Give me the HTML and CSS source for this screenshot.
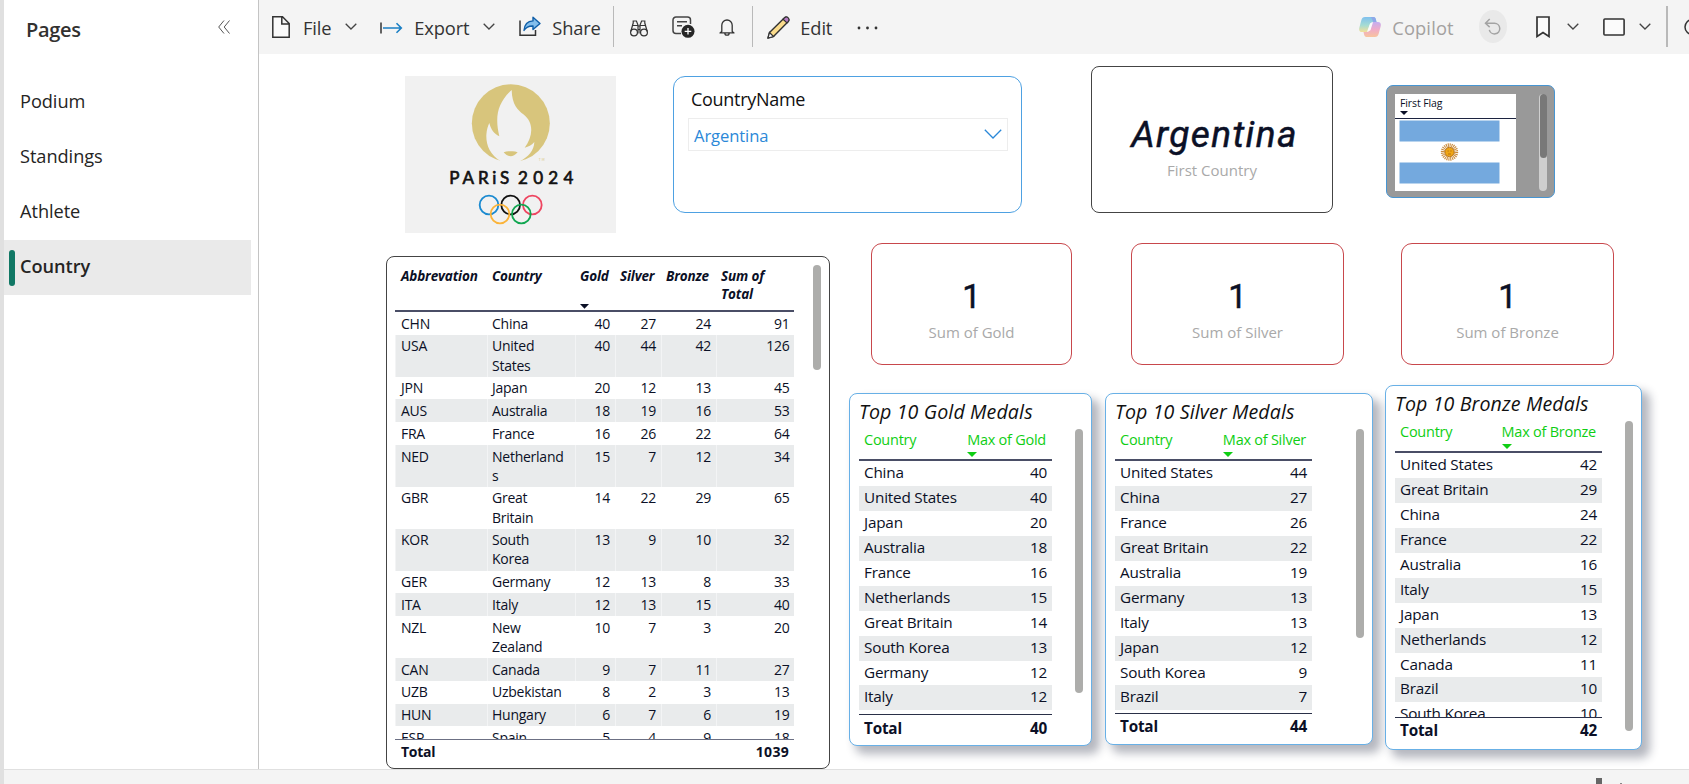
FILE: index.html
```html
<!DOCTYPE html>
<html lang="en">
<head>
<meta charset="utf-8">
<title>Country</title>
<link rel="stylesheet" href="styles.css">
</head>
<body>
<div class="app">
  <div class="workspace">
  <nav class="sidebar">
    <header class="side-head">
      <h2>Pages</h2>
      <svg class="collapse" width="12" height="14" viewBox="0 0 12 14"><path d="M6 .5 .7 7 6 13.500M11.500 .5 6.200 7l5.300 6.500" fill="none" stroke="#555" stroke-width="1"/></svg>
    </header>
    <a class="page">Podium</a>
    <a class="page">Standings</a>
    <a class="page">Athlete</a>
    <a class="page current"><i class="marker"></i>Country</a>
  </nav>
  <main class="main">
    <div class="toolbar">
      <svg class="ic-file" width="18" height="22" viewBox="0 0 18 22"><path d="M.8.8h9.700l6.700 6.700v13.700H.8zM9.800 1v7h7.200" fill="#fbfbfb" stroke="#333" stroke-width="1.500"/></svg>
      <span class="t-file">File</span>
      <svg class="chev c1" width="12" height="7" viewBox="0 0 12 7"><path d="M.7.7 6 6 11.300.7"/></svg>
      <svg class="ic-export" width="23" height="12" viewBox="0 0 23 12"><path d="M1 .5v11" stroke="#333" stroke-width="1.500"/><path d="M3 6h18M16.500 1.200 21.300 6l-4.800 4.800" fill="none" stroke="#1a7fc4" stroke-width="1.600"/></svg>
      <span class="t-export">Export</span>
      <svg class="chev c2" width="12" height="7" viewBox="0 0 12 7"><path d="M.7.7 6 6 11.300.7"/></svg>
      <svg class="ic-share" width="22" height="21" viewBox="0 0 22 21"><path d="M1 4.500V19.200h15.500V14" fill="none" stroke="#333" stroke-width="1.500"/><path d="M14 1.300 21 7.500 14 13.500V10C9.500 9.800 7 11.300 5 14.500 5.400 9 8.500 5.200 14 4.900z" fill="#83beec" stroke="#0f5ea8" stroke-width="1.400" stroke-linejoin="round"/></svg>
      <span class="t-share">Share</span>
      <i class="sep s1"></i>
      <svg class="ic-bino" width="18" height="17" viewBox="0 0 18 17"><g fill="none" stroke="#333" stroke-width="1.200"><circle cx="4" cy="12.500" r="3.400"/><circle cx="14" cy="12.500" r="3.400"/><path d="M.8 11.500 3.200 3M17.200 11.500 14.800 3M3.200 3.500V1h3.200L8 5v8.500M14.800 3.500V1h-3.200L10 5v8.500M3 5.500h4.500M10.500 5.500H15M8 6h2M8 9.500h2"/></g></svg>
      <svg class="ic-note" width="23" height="22" viewBox="0 0 23 22"><path d="M9 17.500H4a3 3 0 0 1-3-3V4a3 3 0 0 1 3-3h11.500a3 3 0 0 1 3 3v4" fill="none" stroke="#444" stroke-width="1.500"/><path d="M5 5.700h10M5 9.700h5" stroke="#444" stroke-width="1.400"/><circle cx="16" cy="15.300" r="6.500" fill="#262626"/><path d="M16 12v6.600M12.700 15.300h6.600" stroke="#fff" stroke-width="1.300"/></svg>
      <svg class="ic-bell" width="16" height="17" viewBox="0 0 16 17"><path d="M2.800 12.500V6.200a5.200 5.200 0 0 1 10.400 0v6.300l1.800 1.400H1zM5.800 14a2.200 2.200 0 0 0 4.400 0" fill="none" stroke="#333" stroke-width="1.300" stroke-linejoin="round"/></svg>
      <i class="sep s2"></i>
      <svg class="ic-pen" width="23" height="23" viewBox="0 0 23 23"><path d="M1 22l1.500-5.500L17 2.200a2.600 2.600 0 0 1 3.800 3.800L6.500 20.500z" fill="#fbdc8c" stroke="#333" stroke-width="1.400" stroke-linejoin="round"/><path d="M16 3.200l1.500-1.300a2.500 2.500 0 0 1 3.700 3.700L20 7z" fill="#b87cc4" stroke="#333" stroke-width="1.200"/><path d="M1 22l1.500-5.500 4 4z" fill="#fff" stroke="#333" stroke-width="1.200"/></svg>
      <span class="t-edit">Edit</span>
      <svg class="ic-dots" width="21" height="4" viewBox="0 0 21 4"><g fill="#333"><circle cx="2" cy="2" r="1.400"/><circle cx="10.500" cy="2" r="1.400"/><circle cx="19" cy="2" r="1.400"/></g></svg>
      <svg class="ic-copilot" width="22" height="20" viewBox="0 0 22 20"><defs><linearGradient id="ga" x1="0" y1="0" x2="0" y2="1"><stop offset="0" stop-color="#7fc0ee"/><stop offset=".55" stop-color="#a5dcd3"/><stop offset="1" stop-color="#f3e09a"/></linearGradient><linearGradient id="gb" x1="0" y1="0" x2="0" y2="1"><stop offset="0" stop-color="#c4aef0"/><stop offset=".5" stop-color="#f0abc8"/><stop offset="1" stop-color="#f8c49d"/></linearGradient></defs><path d="M6 0h8.500c1.500 0 2 1 2.400 2.500L17.500 5h-3.200c-2 0-2.800 1-3.300 2.700L9.400 13c-.5 1.500-1.200 2-2.600 2H3C.6 15-.3 13.200.3 10.800L2.400 3C3 .9 4 0 6 0z" fill="url(#ga)"/><path d="M16 20H7.500c-1.500 0-2-1-2.400-2.500L4.500 15h3.200c2 0 2.800-1 3.300-2.700L12.600 7c.5-1.500 1.200-2 2.600-2H19c2.400 0 3.300 1.800 2.700 4.200L19.600 17c-.6 2.100-1.600 3-3.600 3z" fill="url(#gb)"/><path d="M11 6.500 14 5.300 11.500 13.200 8 14.700z" fill="#fafafa"/><path d="M12 0h2.500c1.500 0 2 1 2.400 2.500L17.500 5h-3.200z" fill="#8fa8e8"/></svg>
      <span class="t-copilot">Copilot</span>
      <span class="undo"><svg width="18" height="17" viewBox="0 0 18 17"><path d="M2 5.300h8.500a5.300 5.300 0 1 1-5.200 6.500M5.700 1 1.500 5.300l4.200 3.800" fill="none" stroke="#a3a3a3" stroke-width="1.500"/></svg></span>
      <svg class="ic-mark" width="14" height="22" viewBox="0 0 14 22"><path d="M1 1h12v19.500l-6-4-6 4z" fill="#fbfbfb" stroke="#333" stroke-width="1.700"/></svg>
      <svg class="chev c3" width="12" height="7" viewBox="0 0 12 7"><path d="M.7.7 6 6 11.300.7"/></svg>
      <svg class="ic-view" width="22" height="18" viewBox="0 0 22 18"><rect x=".9" y="1" width="20.200" height="16" rx="1" fill="#fbfbfb" stroke="#333" stroke-width="1.600"/></svg>
      <svg class="chev c4" width="12" height="7" viewBox="0 0 12 7"><path d="M.7.7 6 6 11.300.7"/></svg>
      <i class="sep s3"></i>
      <svg class="ic-ring" width="5" height="18" viewBox="0 0 5 18"><circle cx="8.500" cy="9" r="7.500" fill="none" stroke="#333" stroke-width="1.500"/></svg>
    </div>

    <div class="report">
      <div class="top-row">
        <svg class="logo" viewBox="45 48 633 471">
          <rect x="45" y="48" width="633" height="471" fill="#f1f1f1"/>
          <circle cx="362.500" cy="190" r="117" fill="#d8c57c"/>
          <path d="M365 90C366 135 384 150 400 163C434 190 428 230 404 263C416 260 424 256 433 246C432 272 415 290 390 304L388 312H336L332 304C300 283 288 255 289 225C290 208 294 198 298 189C303 210 312 220 328 229C314 170 322 130 365 90Z" fill="#f1f1f1"/>
          <path d="M341 277Q352 272 362 274Q372 272 383 277Q372 289 362 289Q350 289 341 277Z" fill="#d8c57c"/>
          <text x="446" y="303" class="logo-tm" textLength="18">TM</text>
          <text x="178" y="372" class="logo-name" textLength="180" lengthAdjust="spacing">PARiS</text>
          <text x="384" y="372" class="logo-name" textLength="166" lengthAdjust="spacing">2024</text>
          <g fill="none" stroke-width="5.500"><circle cx="297" cy="435" r="28" stroke="#1a8ad0"/><circle cx="362" cy="435" r="28" stroke="#111"/><circle cx="427" cy="435" r="28" stroke="#ee4560"/><circle cx="330" cy="462" r="28" stroke="#fbb43a"/><circle cx="394" cy="462" r="28" stroke="#10a650"/></g>
        </svg>
        <section class="slicer">
          <h3>CountryName</h3>
          <div class="dropdown"><span>Argentina</span><svg width="18" height="10" viewBox="0 0 18 10"><path d="M.8.8 9 9 17.200.8" fill="none" stroke="#2b88d8" stroke-width="1.300"/></svg></div>
        </section>
        <section class="card first-country"><b>Argentina</b><span>First Country</span></section>
        <section class="flag-card">
          <div class="flag-table">
            <div class="flag-head"><span>First Flag</span><svg width="8" height="4" viewBox="0 0 8 4"><path d="M0 0h8L4 4z" fill="#0b1026"/></svg></div>
            <svg class="flag" width="101" height="64" viewBox="0 0 101 64"><path d="M0 0h101v64H0z" fill="#fff"/><path d="M.5.5h100v21H.5zM.5 42.500h100v21H.5z" fill="#74a9de"/><circle cx="50.500" cy="32" r="6.700" fill="none" stroke="#c98a3c" stroke-width="4" stroke-dasharray="1 .75"/><circle cx="50.500" cy="32" r="4.600" fill="#f0a614" stroke="#b8741a" stroke-width="1"/><path d="M48.500 31h1.300M51.300 31h1.300M49 34h3" stroke="#a8650f" stroke-width=".8"/></svg>
          </div>
          <div class="flag-track"><i></i></div>
        </section>
      </div>

      <div class="body-row">
        <section class="standings">
          <div class="grid">
            <div class="r head"><span>Abbrevation</span><span>Country</span><span class="sorted">Gold<svg width="9" height="5" viewBox="0 0 9 5"><path d="M0 0h9L4.500 4.700z" fill="#0b1026"/></svg></span><span>Silver</span><span>Bronze</span><span>Sum of Total</span></div>
            <div class="rows">
              <div class="r"><span>CHN</span><span>China</span><span>40</span><span>27</span><span>24</span><span>91</span></div>
              <div class="r"><span>USA</span><span>United<br>States</span><span>40</span><span>44</span><span>42</span><span>126</span></div>
              <div class="r"><span>JPN</span><span>Japan</span><span>20</span><span>12</span><span>13</span><span>45</span></div>
              <div class="r"><span>AUS</span><span>Australia</span><span>18</span><span>19</span><span>16</span><span>53</span></div>
              <div class="r"><span>FRA</span><span>France</span><span>16</span><span>26</span><span>22</span><span>64</span></div>
              <div class="r"><span>NED</span><span>Netherland<br>s</span><span>15</span><span>7</span><span>12</span><span>34</span></div>
              <div class="r"><span>GBR</span><span>Great<br>Britain</span><span>14</span><span>22</span><span>29</span><span>65</span></div>
              <div class="r"><span>KOR</span><span>South<br>Korea</span><span>13</span><span>9</span><span>10</span><span>32</span></div>
              <div class="r"><span>GER</span><span>Germany</span><span>12</span><span>13</span><span>8</span><span>33</span></div>
              <div class="r"><span>ITA</span><span>Italy</span><span>12</span><span>13</span><span>15</span><span>40</span></div>
              <div class="r"><span>NZL</span><span>New<br>Zealand</span><span>10</span><span>7</span><span>3</span><span>20</span></div>
              <div class="r"><span>CAN</span><span>Canada</span><span>9</span><span>7</span><span>11</span><span>27</span></div>
              <div class="r"><span>UZB</span><span>Uzbekistan</span><span>8</span><span>2</span><span>3</span><span>13</span></div>
              <div class="r"><span>HUN</span><span>Hungary</span><span>6</span><span>7</span><span>6</span><span>19</span></div>
              <div class="r"><span>ESP</span><span>Spain</span><span>5</span><span>4</span><span>9</span><span>18</span></div>
            </div>
            <div class="total"><span>Total</span><span>1039</span></div>
          </div>
          <i class="thumb"></i>
        </section>

        <div class="right">
          <div class="kpis">
            <section class="card kpi k-gold"><b>1</b><span>Sum of Gold</span></section>
            <section class="card kpi k-silver"><b>1</b><span>Sum of Silver</span></section>
            <section class="card kpi k-bronze"><b>1</b><span>Sum of Bronze</span></section>
          </div>
          <div class="tops">
            <section class="top10 gold">
              <h3>Top 10 Gold Medals</h3>
              <div class="top-body">
                <div class="list">
                  <div class="lh"><span>Country</span><span>Max of Gold<svg width="10" height="5" viewBox="0 0 10 5"><path d="M0 0h10L5 5z" fill="#0fce14"/></svg></span></div>
                  <div class="lrows">
                    <div><span>China</span><span>40</span></div><div><span>United States</span><span>40</span></div>
                    <div><span>Japan</span><span>20</span></div><div><span>Australia</span><span>18</span></div>
                    <div><span>France</span><span>16</span></div><div><span>Netherlands</span><span>15</span></div>
                    <div><span>Great Britain</span><span>14</span></div><div><span>South Korea</span><span>13</span></div>
                    <div><span>Germany</span><span>12</span></div><div><span>Italy</span><span>12</span></div>
                  </div>
                  <div class="lt"><span>Total</span><span>40</span></div>
                </div>
                <i class="thumb"></i>
              </div>
            </section>
            <section class="top10 silver">
              <h3>Top 10 Silver Medals</h3>
              <div class="top-body">
                <div class="list">
                  <div class="lh"><span>Country</span><span>Max of Silver<svg width="10" height="5" viewBox="0 0 10 5"><path d="M0 0h10L5 5z" fill="#0fce14"/></svg></span></div>
                  <div class="lrows">
                    <div><span>United States</span><span>44</span></div><div><span>China</span><span>27</span></div>
                    <div><span>France</span><span>26</span></div><div><span>Great Britain</span><span>22</span></div>
                    <div><span>Australia</span><span>19</span></div><div><span>Germany</span><span>13</span></div>
                    <div><span>Italy</span><span>13</span></div><div><span>Japan</span><span>12</span></div>
                    <div><span>South Korea</span><span>9</span></div><div><span>Brazil</span><span>7</span></div>
                  </div>
                  <div class="lt"><span>Total</span><span>44</span></div>
                </div>
                <i class="thumb"></i>
              </div>
            </section>
            <section class="top10 bronze">
              <h3>Top 10 Bronze Medals</h3>
              <div class="top-body">
                <div class="list">
                  <div class="lh"><span>Country</span><span>Max of Bronze<svg width="10" height="5" viewBox="0 0 10 5"><path d="M0 0h10L5 5z" fill="#0fce14"/></svg></span></div>
                  <div class="lrows">
                    <div><span>United States</span><span>42</span></div><div><span>Great Britain</span><span>29</span></div>
                    <div><span>China</span><span>24</span></div><div><span>France</span><span>22</span></div>
                    <div><span>Australia</span><span>16</span></div><div><span>Italy</span><span>15</span></div>
                    <div><span>Japan</span><span>13</span></div><div><span>Netherlands</span><span>12</span></div>
                    <div><span>Canada</span><span>11</span></div><div><span>Brazil</span><span>10</span></div>
                    <div><span>South Korea</span><span>10</span></div>
                  </div>
                  <div class="lt"><span>Total</span><span>42</span></div>
                </div>
                <i class="thumb"></i>
              </div>
            </section>
          </div>
        </div>
      </div>
    </div>
  </main>
  </div>
  <footer class="status"><i class="slider"></i><i class="tick"></i></footer>
</div>
</body>
</html>
```
FILE: styles.css
```css
* { box-sizing: border-box; }
body { margin: 0; font-family: "Open Sans", "Noto Sans", sans-serif; color: #0b1026; background: #fff; overflow: hidden; }
h2, h3 { margin: 0; font-weight: 400; }
svg { display: block; flex: none; }
i { display: block; flex: none; }
span { white-space: nowrap; }

.app { width: 1689px; height: 784px; border-left: 4px solid #e0e0e0; }
.workspace { display: flex; height: 769px; }

.sidebar { flex: none; width: 255px; height: 769px; border-right: 1px solid #c4c4c4; background: #fff; }
.side-head { display: flex; height: 73px; padding: 17px 28px 0 22px; justify-content: space-between; }
.side-head h2 { font-size: 20px; line-height: 26px; font-weight: 600; letter-spacing: -.3px; color: #323130; }
.collapse { margin-top: 3px; }
.page { display: flex; align-items: center; height: 55px; padding-left: 16px; font-size: 18.2px; letter-spacing: -.05px; color: #252423; }
.page.current { width: 247px; height: 55px; margin-top: 2px; padding: 0 0 4px 5px; background: #eaeaea; font-weight: 600; }
.marker { width: 6px; height: 36px; margin: 4px 5px 0 0; border-radius: 3px; background: #117865; }

.main { flex: none; width: 1430px; height: 769px; display: flex; flex-direction: column; }
.toolbar { flex: none; display: flex; align-items: flex-start; height: 54px; background: #f4f4f4; font-size: 18.3px; line-height: 26px; letter-spacing: -.15px; color: #333; overflow: hidden; }
.toolbar span:not(.undo) { margin-top: 15px; }
.chev { margin-top: 23px; }
.chev path { fill: none; stroke: #444; stroke-width: 1.3; }
.ic-file { margin: 16px 0 0 13px; }
.t-file { width: 30px; margin-left: 13px; }
.c1 { margin-left: 14px; }
.ic-export { margin: 22px 0 0 23px; }
.t-export { width: 56px; margin-left: 11px; }
.c2 { margin-left: 14px; }
.ic-share { margin: 16px 0 0 24px; }
.t-share { width: 48px; margin-left: 11px; }
.sep { width: 1px; height: 41px; margin-top: 6px; background: #b9b9b9; }
.s1 { margin-left: 13px; }
.ic-bino { margin: 20px 0 0 16px; }
.ic-note { margin: 16px 0 0 24px; }
.ic-bell { margin: 19px 0 0 24px; }
.s2 { margin-left: 17px; }
.ic-pen { margin: 16px 0 0 14px; }
.t-edit { width: 34px; margin-left: 10px; }
.ic-dots { margin: 26px 0 0 25px; }
.ic-copilot { margin: 17px 0 0 481px; }
.t-copilot { width: 63px; margin-left: 11px; letter-spacing: .15px; color: #a3a19f; }
.undo { display: flex; width: 33px; height: 33px; margin: 10px 0 0 25px; align-items: center; justify-content: center; border-radius: 50%; background: #e9e9e9; }
.ic-mark { margin: 16px 0 0 29px; }
.c3 { margin-left: 17px; }
.ic-view { margin: 18px 0 0 24px; }
.c4 { margin-left: 14px; }
.s3 { width: 2px; margin-left: 15px; }
.ic-ring { margin: 18px 0 0 16px; }

.report { flex: none; height: 715px; padding-left: 127px; }
.top-row { display: flex; align-items: flex-start; height: 189px; }
.logo { width: 211px; height: 157px; margin: 22px 0 0 19px; }
.logo-name { font: 400 51px Lato, sans-serif; fill: #111; stroke: #111; stroke-width: 2px; }
.logo-tm { font: 9px Lato, sans-serif; fill: #d8c57c; }

.slicer { flex: none; width: 349px; height: 137px; margin: 22px 0 0 57px; padding: 10px 13px 0 14px; border: 1px solid #4ea1e2; border-radius: 12px; }
.slicer h3 { padding-left: 3px; font-size: 18px; line-height: 25px; letter-spacing: -.3px; color: #111; }
.dropdown { display: flex; justify-content: space-between; width: 320px; height: 33px; margin-top: 6px; padding: 4px 5px 0; border: 1px solid #ededed; font-size: 16.6px; line-height: 25px; letter-spacing: -.1px; color: #2b88d8; }
.dropdown svg { margin-top: 6px; }

.card { flex: none; display: flex; flex-direction: column; align-items: center; }
.card span { color: #a9a9a9; font-size: 15px; line-height: 20px; }
.card b { font-family: Roboto, sans-serif; font-weight: 400; -webkit-text-stroke: .5px #0b1026; }
.first-country { width: 242px; height: 147px; margin: 12px 0 0 69px; padding-top: 45px; border: 1px solid #444; border-radius: 8px; }
.first-country b { padding-left: 5px; font-size: 37px; line-height: 46px; font-style: italic; letter-spacing: 1.4px; }
.first-country span { margin-top: 2px; }

.flag-card { flex: none; display: flex; width: 169px; height: 113px; margin: 31px 0 0 53px; padding: 8px 7px 0 8px; justify-content: space-between; border: 1px solid #4795d2; border-radius: 7px; background: #999; }
.flag-table { width: 121px; height: 97px; background: #fff; }
.flag-head { height: 25px; padding: 1px 0 0 5px; border-bottom: 1px solid #1c2340; font-size: 10.5px; line-height: 16px; letter-spacing: -.1px; }
.flag { margin: 1px 0 0 4px; }
.flag-track { width: 8px; height: 97px; border-radius: 4px; background: #cfcfcf; }
.flag-track i { width: 7px; height: 64px; margin-left: .5px; border-radius: 4px; background: #787878; }

.body-row { display: flex; align-items: flex-start; }
.standings { flex: none; display: flex; justify-content: space-between; width: 444px; height: 513px; margin-top: 13px; padding: 8px; border: 1px solid #444; border-radius: 8px; }
.grid { width: 399px; font-size: 14px; letter-spacing: -.25px; line-height: 19.150px; }
.r { display: grid; grid-template-columns: 91.500px 88px 40px 46px 55px 78.500px; }
.r > span { padding: 1.600px 4.500px 2px 4.500px; text-align: right; border-left: 1px solid transparent; }
.r > span:nth-child(-n+2) { text-align: left; }
.r > span:first-child { padding-left: 5px; }
.head { height: 47px; border-bottom: 2px solid #4a4e66; font-size: 13.5px; font-weight: 700; font-style: italic; letter-spacing: -.15px; line-height: 18px; }
.head > span { padding-right: 0; white-space: normal; text-align: left; }
.head > span:last-child { padding-right: 20px; }
.head svg { margin-top: 19px; }
.rows { height: 427px; overflow: hidden; }
.rows .r:nth-child(even) > span { border-color: #f3f4f5; background: #e9ebec; }
.total { display: flex; justify-content: space-between; padding: 2px 5px 0 6px; border-top: 1px solid #6c7084; font-weight: 700; line-height: 20px; }
.total span:last-child { letter-spacing: .3px; }
.thumb { width: 8px; border-radius: 4px; background: #adadab; }
.standings .thumb { height: 105px; }

.right { flex: none; width: 812px; }
.kpis { display: flex; height: 142px; padding-left: 41px; }
.kpi { height: 122px; padding-top: 34px; border: 1px solid #c8474c; border-radius: 11px; }
.kpi b { font-size: 33px; line-height: 38px; }
.kpi span { margin-top: 6px; }
.k-gold { width: 201px; }
.k-silver { width: 213px; margin-left: 59px; }
.k-bronze { width: 213px; margin-left: 57px; }

.tops { display: flex; align-items: flex-start; padding-left: 19px; }
.top10 { flex: none; padding: 6px 8px 0 9px; border: 1px solid #68b0e6; border-radius: 8px; background: #fff; box-shadow: 7px 7px 10px 1px rgba(30,35,60,.33); }
.top10 h3 { font-size: 19.6px; font-style: italic; line-height: 24px; letter-spacing: .12px; color: #111; white-space: nowrap; }
.top-body { display: flex; justify-content: space-between; }
.gold { width: 243px; height: 353px; margin-top: 8px; }
.silver { width: 268px; height: 352px; margin: 8px 0 0 13px; }
.bronze { width: 257px; height: 365px; margin-left: 12px; }
.list { width: 193px; font-size: 15.3px; letter-spacing: -.2px; }
.silver .list { width: 197px; }
.bronze .list { width: 207px; }
.lh, .lt, .lrows div { display: flex; justify-content: space-between; padding: 0 5px; }
.lh { height: 37px; padding: 6px 6px 0 5px; border-bottom: 2px solid #4a4e66; line-height: 20px; font-size: 14.5px; letter-spacing: -.25px; color: #0fce14; }
.lh svg { margin-top: 2px; }
.lrows { height: 253px; overflow: hidden; }
.lrows div { height: 24.950px; line-height: 23.500px; }
.lrows div:nth-child(even) { background: #e9ebec; }
.lt { border-top: 1px solid #2a3048; font-weight: 700; line-height: 26px; }
.silver .lrows { height: 252px; }
.silver .lt { line-height: 25px; }
.bronze .lrows { height: 264px; }
.bronze .lt { line-height: 25px; }
.top10 .thumb { margin-top: 5px; }
.gold .thumb { height: 264px; }
.silver .thumb { height: 209px; }
.bronze .thumb { height: 310px; }

.status { display: flex; height: 15px; border-top: 1px solid #e0e0e0; background: #f4f4f4; }
.slider { width: 6px; height: 6px; margin: 8px 0 0 1592px; background: #666; }
.tick { width: 2px; height: 1px; margin: 13px 0 0 18px; background: #888; }
```
